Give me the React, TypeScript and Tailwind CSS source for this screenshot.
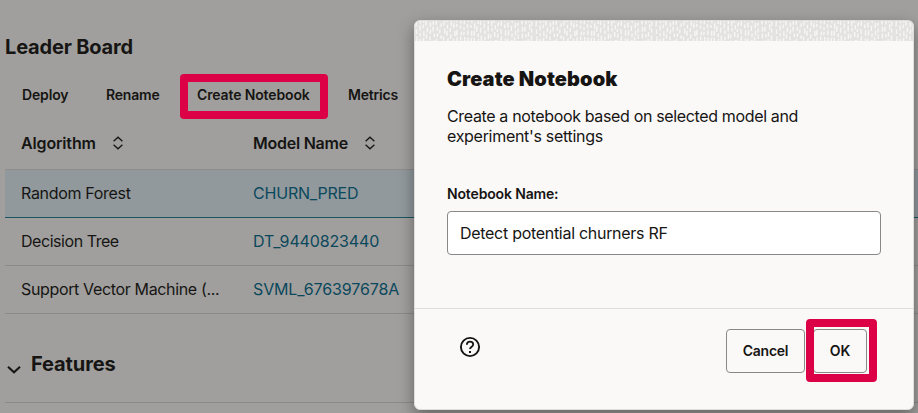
import React from "react";

function SortIcon() {
  return (
    <svg width="12" height="14" viewBox="0 0 12 14" fill="none" stroke="#161513" strokeWidth="1.3">
      <path d="M1.6 5.2 6 1.2l4.4 4M1.6 8.8l4.4 4 4.4-4" />
    </svg>
  );
}

const rows = [
  { algorithm: "Random Forest", model: "CHURN_PRED", at: "tracking-[-0.32px]", mt: "tracking-[-0.2px]", line: "border-[#8f8c8b] bg-[#91999c]" },
  { algorithm: "Decision Tree", model: "DT_9440823440", at: "tracking-[-0.45px]", mt: "tracking-[-0.15px]", line: "border-[#1b5564]" },
  { algorithm: "Support Vector Machine (...", model: "SVML_676397678A", at: "tracking-[-0.35px]", mt: "tracking-[-0.13px]", line: "border-[#8c8a88]" },
];

function LeaderBoard() {
  return (
    <main className="flex h-full flex-col pl-[5px]">
      <h1 className="mt-[33px] h-7 text-[20px] leading-7 font-bold tracking-[-0.18px]">Leader Board</h1>
      <div className="mt-[13px] flex h-[45px] items-center text-[14px] font-semibold">
        <span className="w-[84px] pb-[5px] pl-[17px] tracking-[-0.15px]">Deploy</span>
        <span className="w-[91px] pb-[5px] pl-[17px] tracking-[-0.2px]">Rename</span>
        <div className="flex h-[45px] w-[148px] shrink-0 items-center rounded-[4px] border-8 border-[#dc0046] pb-[5px] pl-[9px] tracking-[-0.13px] whitespace-nowrap">Create Notebook</div>
        <span className="pb-[5px] pl-[20px] tracking-[-0.2px]">Metrics</span>
      </div>
      <div className="flex h-[50px] items-center pb-[2px] text-[16px] font-semibold">
        <div className="flex w-[232px] items-center gap-[16px] pl-4">
          <span className="tracking-[-0.15px]">Algorithm</span>
          <SortIcon />
        </div>
        <div className="flex items-center gap-[16px] pl-4">
          <span className="tracking-[-0.25px]">Model Name</span>
          <SortIcon />
        </div>
      </div>
      {rows.map((r) => (
        <div key={r.model} className={"flex h-12 shrink-0 items-center border-t pb-[2px] text-[16px] " + r.line}>
          <span className={"w-[232px] pl-4 " + r.at}>{r.algorithm}</span>
          <span className={"pl-4 text-[#0b485c] " + r.mt}>{r.model}</span>
        </div>
      ))}
      <div className="flex h-[90px] shrink-0 items-center border-y border-[#8c8a88] pt-3">
        <svg className="mt-3 ml-[2px]" width="14" height="10" viewBox="0 0 14 10" fill="none" stroke="#161513" strokeWidth="2">
          <path d="M1 1.8 7 7.3l6-5.5" />
        </svg>
        <h2 className="ml-[10px] text-[20px] leading-7 font-bold tracking-[-0.1px]">Features</h2>
      </div>
    </main>
  );
}

// Short vertical bristles laid out on a jittered grid.
function bristles() {
  let seed = 7;
  const rand = () => {
    seed = (seed * 16807) % 2147483647;
    return seed / 2147483647;
  };
  let d = "";
  for (let x = 1; x < 120; x += 3.4) {
    let y = -rand() * 6;
    while (y < 21) {
      const len = 3 + rand() * 3;
      const px = x + rand() * 1.4;
      d += `M${px.toFixed(1)} ${y.toFixed(1)}l${(rand() * 0.8 - 0.6).toFixed(1)} ${len.toFixed(1)}`;
      y += len + 1.5 + rand() * 1.5;
    }
  }
  return d;
}

function TextureStrip() {
  return (
    <svg className="block h-[20px] w-full shrink-0">
      <defs>
        <pattern id="bristle" width="120" height="21" patternUnits="userSpaceOnUse">
          <rect width="120" height="21" fill="#e4e2e1" />
          <path d={bristles()} stroke="#f7f5f4" strokeWidth="1.5" fill="none" />
        </pattern>
      </defs>
      <rect width="100%" height="100%" fill="url(#bristle)" />
    </svg>
  );
}

function CreateNotebookDialog() {
  return (
    <section className="absolute top-[20px] left-[414px] flex h-[390px] w-[500px] flex-col overflow-hidden rounded-[6px] border border-[#e0dedc] bg-[#fbf9f8] shadow-[0_6px_16px_0_rgba(0,0,0,0.38)]">
      <TextureStrip />
      <div className="flex h-[267px] flex-col px-8">
        <h2 className="mt-[24px] text-[20px] leading-7 font-black tracking-[0.1px]">Create Notebook</h2>
        <p className="mt-[13px] text-[16px] leading-5 whitespace-nowrap">
          <span className="tracking-[-0.35px]">Create a notebook based on selected model and</span>
          <br />
          <span className="tracking-[-0.3px]">experiment's settings</span>
        </p>
        <label className="mt-[38px] text-[14px] leading-5 font-semibold tracking-[-0.15px]">Notebook Name:</label>
        <input
          className="mt-[7px] h-11 w-[434px] shrink-0 rounded-[4px] border border-[#8a8886] bg-white px-3 text-[16px] tracking-[-0.29px] outline-none"
          defaultValue="Detect potential churners RF"
        />
      </div>
      <footer className="flex flex-1 items-start border-t border-[#e0dedc] pt-[20px] pl-[44px]">
        <svg className="mt-[7px]" width="22" height="22" viewBox="0 0 22 22" fill="none" stroke="#161513">
          <circle cx="11" cy="11" r="9.1" strokeWidth="1.9" />
          <path d="M7.8 8.7C7.9 6.8 9.2 5.7 11 5.7s3.2 1.1 3.2 2.8c0 2.1-3.2 2.3-3.2 4.6" strokeWidth="1.8" />
          <path d="M11 14.9v2" strokeWidth="2" />
        </svg>
        <button className="ml-[245px] h-11 w-[79px] rounded-[4px] border border-[#8a8886] pb-[2px] text-[14px] font-semibold tracking-[-0.25px]">Cancel</button>
        <div className="relative ml-2">
          <button className="h-11 w-[54px] rounded-[4px] border border-[#8a8886] pb-[2px] text-[14px] font-semibold">OK</button>
          <div className="absolute top-[-10px] left-[-7px] h-[63px] w-[71px] rounded-[4px] border-8 border-[#dc0046]" />
        </div>
      </footer>
    </section>
  );
}

export default function App() {
  return (
    <div className="relative h-[413px] w-[918px] overflow-hidden bg-[#a09f9d] font-[Inter,'Liberation_Sans',sans-serif] text-[#161513]">
      <LeaderBoard />
      <CreateNotebookDialog />
    </div>
  );
}
